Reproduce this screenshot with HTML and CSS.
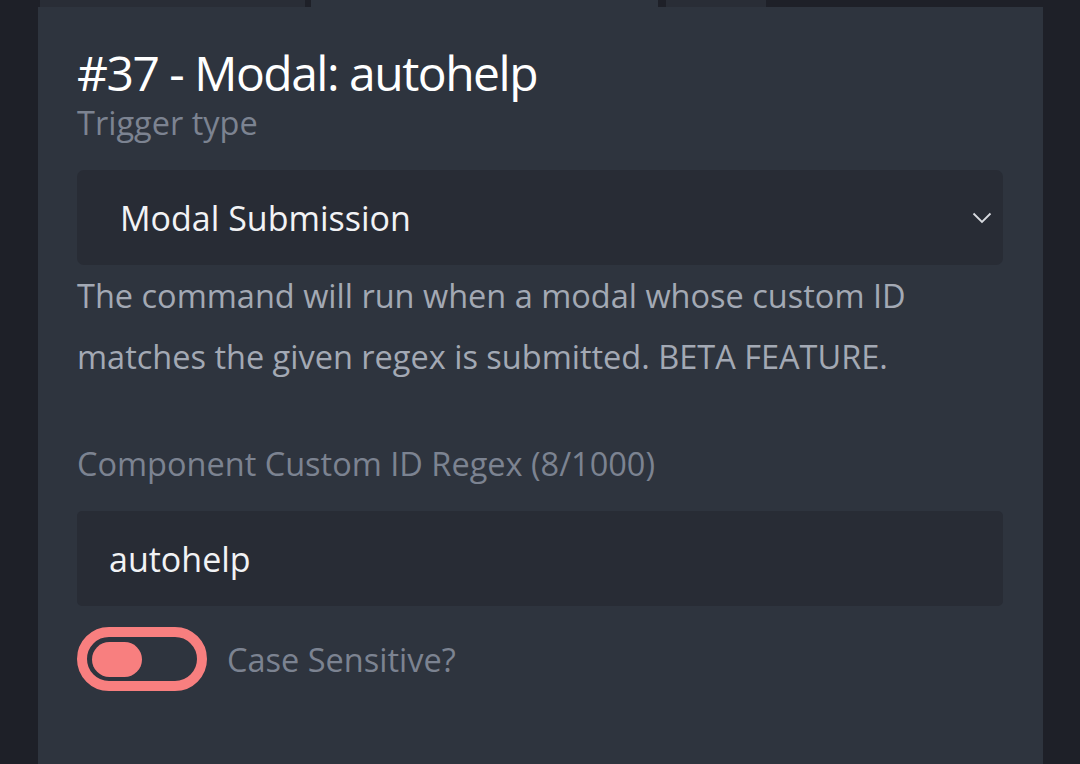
FILE: index.html
```html
<!DOCTYPE html>
<html lang="en">
<head>
<meta charset="utf-8">
<title>#37 - Modal: autohelp</title>
<link rel="stylesheet" href="styles.css">
</head>
<body>
<div class="page">
  <div class="tabs">
    <div class="tab tab-a"></div>
    <div class="tab tab-active"></div>
    <div class="tab tab-c"></div>
  </div>
  <div class="panel">
    <h1 class="title">#37 - Modal: autohelp</h1>
    <div class="label">Trigger type</div>
    <div class="select">
      <span class="select-text">Modal Submission</span>
      <svg class="chevron" width="20" height="12" viewBox="0 0 20 12"><path d="M1.5 1.5 L10 10 L18.5 1.5" fill="none" stroke="#d8dbe0" stroke-width="1.8"/></svg>
    </div>
    <p class="desc">The command will run when a modal whose custom ID matches the given regex is submitted. BETA FEATURE.</p>
    <div class="label label-field">Component Custom ID Regex (8/1000)</div>
    <div class="input">autohelp</div>
    <div class="toggle-row">
      <div class="toggle"><div class="knob"></div></div>
      <span class="toggle-label">Case Sensitive?</span>
    </div>
  </div>
</div>
</body>
</html>
```
FILE: styles.css
```css
html, body {
  margin: 0;
  padding: 0;
  background: #1e2028;
  height: 100%;
  overflow: hidden;
}
body {
  font-family: "Open Sans", "Noto Sans", sans-serif;
}
.page {
  width: 1080px;
  height: 764px;
  display: flex;
  flex-direction: column;
}
.tabs {
  height: 7px;
  display: flex;
  padding-left: 40px;
}
.tab { height: 7px; }
.tab-a { width: 265px; background: #292d36; }
.tab-active { width: 347px; margin-left: 6px; background: #2e343e; }
.tab-c { width: 100px; margin-left: 8px; background: #292d36; }
.panel {
  margin-left: 38px;
  width: 1005px;
  flex: 1;
  background: #2e343e;
  box-sizing: border-box;
  padding: 40px 40px 0 39px;
}
.title {
  margin: 0 0 4px;
  font-weight: 400;
  font-size: 48px;
  line-height: 52px;
  color: #ffffff;
  letter-spacing: -1.5px;
}
.label {
  font-size: 32.5px;
  line-height: 40px;
  color: #7c8391;
}
.select {
  margin-top: 27px;
  height: 95px;
  background: #282c35;
  border-radius: 7px;
  display: flex;
  align-items: center;
  justify-content: space-between;
  padding: 0 11px 0 43px;
}
.select-text {
  font-size: 34px;
  color: #f2f3f5;
}
.chevron { display: block; }
.desc {
  margin: 0;
  font-size: 32.5px;
  line-height: 61px;
  color: #a3a9b4;
}
.label-field {
  margin-top: 57px;
}
.input {
  margin-top: 27px;
  height: 95px;
  background: #282c35;
  border-radius: 5px;
  box-sizing: border-box;
  padding-left: 32px;
  display: flex;
  align-items: center;
  font-size: 34px;
  color: #f2f3f5;
}
.toggle-row {
  margin-top: 21px;
  display: flex;
  align-items: center;
  gap: 20px;
}
.toggle {
  width: 130px;
  height: 64px;
  box-sizing: border-box;
  border: 10px solid #f87f7f;
  border-radius: 32px;
  display: flex;
  align-items: center;
  padding-left: 5px;
}
.knob {
  width: 50px;
  height: 35px;
  border-radius: 18px;
  background: #f87f7f;
}
.toggle-label {
  font-size: 32.5px;
  color: #7c8391;
}
```
